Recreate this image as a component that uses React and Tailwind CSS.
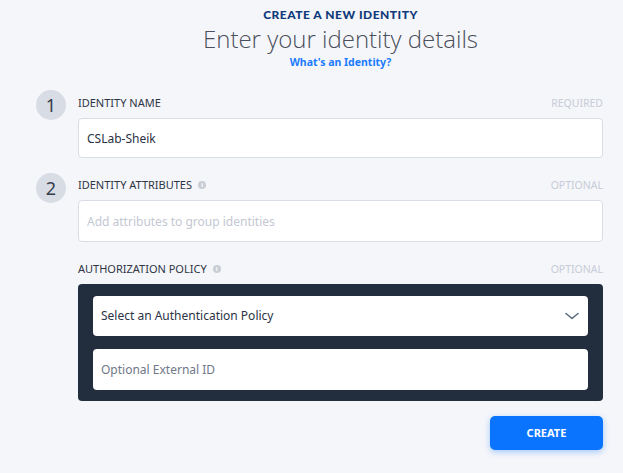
function InfoDot() {
  return (
    <span className="ml-[6px] inline-flex h-[8px] w-[8px] items-center justify-center rounded-full bg-[#c9cdd5] text-[6px] font-bold leading-none text-white">
      i
    </span>
  )
}

function StepCircle({ n }) {
  return (
    <div className="flex h-[30px] w-[30px] shrink-0 items-center justify-center rounded-full bg-[#d8dce4] text-[18px] leading-none text-[#363c4c]">
      {n}
    </div>
  )
}

function FieldLabel({ text, hint, info }) {
  return (
    <div className="flex h-[16px] items-center justify-between text-[11px] leading-[16px]">
      <span className="flex items-center text-[#2f3545]">
        {text}
        {info && <InfoDot />}
      </span>
      <span className="text-[10.5px] text-[#c7ccd6]">{hint}</span>
    </div>
  )
}

export default function App() {
  return (
    <div className="min-h-[473px] w-full bg-[#f5f6fa] font-['Noto_Sans',sans-serif]">
      <div className="pl-[78px] pr-[20px] pt-[8px] text-center">
        <div className="h-[14px] font-['Lato',sans-serif] text-[12px] font-black leading-[14px] tracking-[0.5px] text-[#0f3a7a]">
          CREATE A NEW IDENTITY
        </div>
        <div className="mt-[1px] h-[32px] font-['Open_Sans',sans-serif] text-[24px] font-light leading-[32px] text-[#4a4f5c]">
          Enter your identity details
        </div>
        <div className="h-[14px] text-[10.5px] font-bold leading-[14px] text-[#1a7bff]">
          What's an Identity?
        </div>
      </div>

      <div className="mt-[21px] pl-[36px] pr-[20px]">
        <div className="flex gap-[12px]">
          <StepCircle n="1" />
          <div className="flex-1 pt-[5px]">
            <FieldLabel text="IDENTITY NAME" hint="REQUIRED" />
            <input
              readOnly
              value="CSLab-Sheik"
              className="mt-[7px] block h-[40px] w-full rounded-[4px] border border-[#d9dde4] bg-white px-[8px] text-[12px] text-[#2b3142] outline-none"
            />
          </div>
        </div>

        <div className="mt-[15px] flex gap-[12px]">
          <StepCircle n="2" />
          <div className="flex-1 pt-[4px]">
            <FieldLabel text="IDENTITY ATTRIBUTES" hint="OPTIONAL" info />
            <input
              readOnly
              placeholder="Add attributes to group identities"
              className="mt-[7px] block h-[42px] w-full rounded-[4px] border border-[#d9dde4] bg-white px-[8px] text-[12px] text-[#2b3142] outline-none placeholder:text-[#c3c8d2]"
            />
          </div>
        </div>

        <div className="mt-[19px] flex gap-[12px]">
          <div className="w-[30px] shrink-0" />
          <div className="flex-1">
            <FieldLabel text="AUTHORIZATION POLICY" hint="OPTIONAL" info />
            <div className="mt-[7px] flex flex-col gap-[13px] rounded-[4px] bg-[#222d3e] px-[15px] pb-[11px] pt-[12px]">
              <div className="flex h-[40px] items-center justify-between rounded-[4px] bg-white pl-[8px] pr-[8px] text-[12px] text-[#2b3345]">
                <span>Select an Authentication Policy</span>
                <svg width="14" height="8" viewBox="0 0 14 8" fill="none" className="mr-[1px]">
                  <path d="M1 1.5 L7 6.5 L13 1.5" stroke="#5d6d7e" strokeWidth="1.6" strokeLinecap="round" strokeLinejoin="round" />
                </svg>
              </div>
              <input
                readOnly
                placeholder="Optional External ID"
                className="block h-[41px] w-full rounded-[4px] bg-white px-[8px] text-[12px] outline-none placeholder:text-[#6f7888]"
              />
            </div>
            <div className="mt-[15px] flex justify-end">
              <button className="h-[34px] w-[113px] rounded-[5px] bg-[#0a74ff] text-[11px] font-bold text-white shadow-[0_2px_6px_rgba(10,116,255,0.35)]">
                CREATE
              </button>
            </div>
          </div>
        </div>
      </div>
    </div>
  )
}
